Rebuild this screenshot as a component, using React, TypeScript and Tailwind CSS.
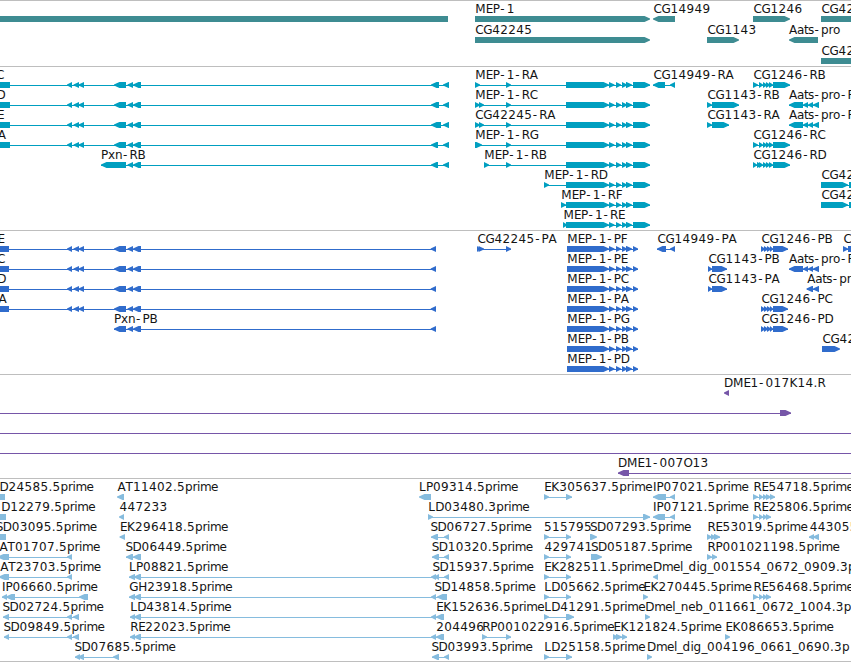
type Span = [number, number];
type Dir = "L" | "R";

interface Feature {
  label?: string;
  at?: number;
  dir: Dir;
  spans: Span[];
}

interface TrackData {
  color: string;
  height: string;
  rowHeight: number;
  rows: Feature[][];
}

const f = (label: string, at: number, dir: Dir, ...spans: Span[]): Feature => ({ label, at, dir, spans });

// Horizontal advance of each label glyph, in pixels.
const ADVANCE: Record<string, number> = {
  A: 8, B: 7.5, C: 8, D: 9, E: 7, G: 9, H: 9, I: 3.5, K: 8, L: 7, M: 10.5, O: 9, P: 7, R: 8, S: 7, T: 7.5,
  a: 7, b: 8, d: 8, e: 7, g: 8, i: 3, l: 3, m: 11, n: 7.5, o: 7.5, p: 7.5, r: 4.5, s: 6, t: 4, x: 7,
  "-": 7, "_": 5.5, ".": 4,
};

// Labels sit half a pixel inside the left end of their feature.
const LABEL_INSET = 0.6;

function glyphPositions(text: string, start: number) {
  let x = start + LABEL_INSET;
  return Array.from(text)
    .map((ch) => {
      const pos = ch === "-" ? x + 0.6 : x;
      x += ADVANCE[ch] ?? 8;
      return pos;
    })
    .join(" ");
}

function spanPoints([a, b]: Span, dir: Dir) {
  const tip = Math.min(5.5, b - a);
  return dir === "R"
    ? `${a},14 ${b - tip},14 ${b},16.5 ${b},17.5 ${b - tip},20 ${a},20`
    : `${b},14 ${a + tip},14 ${a},16.5 ${a},17.5 ${a + tip},20 ${b},20`;
}

// Gene track
const genes: Feature[][] = [
  [
    f("", 0, "L", [-20, 448]),
    f("MEP-1", 474.6, "R", [475, 650]),
    f("CG14949", 653, "L", [653, 675]),
    f("CG1246", 753, "R", [753, 790]),
    f("CG42", 821, "R", [821, 900]),
  ],
  [
    f("CG42245", 474.6, "R", [475, 650]),
    f("CG1143", 707, "R", [707, 739]),
    f("Aats-pro", 788.4, "L", [789, 818]),
  ],
  [f("CG42", 821, "R", [821, 900])],
];

// Exons shared by several transcripts
const pxnA: Span[] = [[67, 72], [73.5, 79], [78.5, 84]];
const pxnB: Span[] = [[127.5, 133], [133, 141]];
const mepTail: Span[] = [[566, 609], [609, 614.5], [616, 621], [622, 627], [626, 632]];
const mepCds: Span[] = [[567, 609], ...mepTail.slice(1), [633, 638]];
const mepEnd: Span[] = [...mepTail, [633, 650]];
const pxnRna = (label: string, at: number, end: number) =>
  f(label, at, "L", [-20, 10], ...pxnA, [114, 126], ...pxnB, [431, end], [443, 449]);
const pxnPep = (label: string, at: number) =>
  f(label, at, "L", [-20, 9], ...pxnA, [114, 126], ...pxnB, [430.7, 436]);
const cg1246: Span[] = [[759, 763], [763, 767], [766, 770], [769, 773], [773, 790]];
const cg1246p: Span[] = [[761, 765], [764, 768], [767, 771], [770, 773], [773, 788]];
const aats: Span[] = [[789, 803], [803, 808], [808, 813], [813, 819]];

const transcripts: Feature[][] = [
  [
    pxnRna("C", -4.6, 439),
    f("MEP-1-RA", 474.6, "R", [475, 480], [506, 511], ...mepEnd),
    f("CG14949-RA", 653, "L", [653, 665], [670, 675]),
    f("CG1246-RB", 753, "R", [753, 758], ...cg1246),
  ],
  [
    pxnRna("D", -4.2, 439),
    f("MEP-1-RC", 474.6, "R", [475, 480], [479, 484], [506, 511], ...mepEnd),
    f("CG1143-RB", 707, "R", [707, 712], [712, 739]),
    f("Aats-pro-R", 788.4, "L", ...aats),
  ],
  [
    pxnRna("E", -3.6, 441),
    f("CG42245-RA", 474.6, "R", [475, 480], [479, 484], [506, 511], ...mepEnd),
    f("CG1143-RA", 707, "R", [707, 712], [712, 729]),
    f("Aats-pro-R", 788.4, "L", ...aats),
  ],
  [
    pxnRna("A", -2.9, 438),
    f("MEP-1-RG", 474.6, "R", [475, 482], [506, 511], ...mepEnd),
    f("CG1246-RC", 753, "R", [753, 758], ...cg1246),
  ],
  [
    f("Pxn-RB", 100.4, "L", [101, 126], ...pxnB, [431, 438], [443, 449]),
    f("MEP-1-RB", 483.6, "R", [484, 489], [506, 511], ...mepEnd),
    f("CG1246-RD", 753, "R", [753, 757], [757, 762], ...cg1246),
  ],
  [f("MEP-1-RD", 543.6, "R", [544, 549], ...mepEnd), f("CG42", 821, "R", [821, 848], [849, 870])],
  [f("MEP-1-RF", 560.6, "R", [561, 566], ...mepEnd), f("CG42", 821, "R", [821, 848], [849, 870])],
  [f("MEP-1-RE", 562.8, "R", [563, 567], ...mepEnd)],
];

const proteins: Feature[][] = [
  [
    pxnPep("E", -3.2),
    f("CG42245-PA", 477, "R", [477, 480], [478.5, 484], [506, 511]),
    f("MEP-1-PF", 566.6, "R", ...mepCds),
    f("CG14949-PA", 657, "L", [657, 666], [670, 675]),
    f("CG1246-PB", 761, "R", ...cg1246p),
    f("C", 843, "R", [843, 848], [848, 870]),
  ],
  [
    pxnPep("C", -3.6),
    f("MEP-1-PE", 566.6, "R", ...mepCds),
    f("CG1143-PB", 708, "R", [708, 712], [712, 727]),
    f("Aats-pro-P", 788.4, "L", ...aats),
  ],
  [
    pxnPep("D", -3.4),
    f("MEP-1-PC", 566.6, "R", ...mepCds),
    f("CG1143-PA", 708, "R", [708, 712], [712, 727]),
    f("Aats-pro", 806.6, "L", [806.5, 813], [813, 819]),
  ],
  [pxnPep("A", -2.1), f("MEP-1-PA", 566.6, "R", ...mepCds), f("CG1246-PC", 761, "R", ...cg1246p)],
  [
    f("Pxn-PB", 113.4, "L", [114, 126], ...pxnB, [430.7, 436]),
    f("MEP-1-PG", 566.6, "R", ...mepCds),
    f("CG1246-PD", 761, "R", ...cg1246p),
  ],
  [f("MEP-1-PB", 566.6, "R", ...mepCds), f("CG42", 822, "R", [822, 840])],
  [f("MEP-1-PD", 566.6, "R", ...mepCds)],
];

const clones: Feature[][] = [
  [f("DME1-017K14.R", 723.4, "L", [724, 729])],
  [f("", 0, "R", [-20, -10], [780, 791])],
  [f("", 0, "R", [-20, -10], [870, 880])],
  [f("", 0, "R", [-20, -10], [870, 880])],
  [f("DME1-007O13", 617.4, "L", [618, 629], [870, 880])],
];

const re: Span[] = [[753, 758], [759, 763], [763, 767], [766, 771]];
const ek: Span[] = [[544, 549], [566, 571]];
const sd: Span[] = [[432, 439], [444, 449]];

const ests: Feature[][] = [
  [
    f("D24585.5prime", -1, "L", [-20, 5]),
    f("AT11402.5prime", 116.8, "L", [117, 124]),
    f("LP09314.5prime", 418.4, "L", [419, 431]),
    f("EK305637.5prime", 543.6, "R", [544, 549], [566, 572]),
    f("IP07021.5prime", 652.4, "L", [653, 666], [670, 675]),
    f("RE54718.5prime", 752.8, "R", [753, 758], [759, 763], [763, 767], [766, 771], [770, 775]),
  ],
  [
    f("D12279.5prime", 0.6, "L", [-20, 6]),
    f("447233", 119, "L", [119, 124]),
    f("LD03480.3prime", 427.6, "R", [428, 433], [643, 650]),
    f("IP07121.5prime", 652.4, "L", [653, 665], [670, 675]),
    f("RE25806.5prime", 752.8, "R", ...re),
  ],
  [
    f("SD03095.5prime", -4.8, "L", [-20, 6]),
    f("EK296418.5prime", 119.4, "L", [119.5, 125]),
    f("SD06727.5prime", 430, "L", [431, 438], [444, 449]),
    f("515795", 543.4, "R", ...ek),
    f("SD07293.5prime", 589.4, "R", [590, 597]),
    f("RE53019.5prime", 706.8, "R", [707, 712], [711, 716], [714, 720]),
    f("443055", 809.2, "L", [809, 814], [813, 819]),
  ],
  [
    f("AT01707.5prime", -1, "L", [-2, 9], [67, 72]),
    f("SD06449.5prime", 125, "L", [126, 133], [133, 141]),
    f("SD10320.5prime", 431.2, "L", ...sd),
    f("429741", 544, "R", ...ek),
    f("SD05187.5prime", 590.4, "R", [591, 602]),
    f("RP001021198.5prime", 706.8, "R", [707, 712], [712, 717]),
  ],
  [
    f("AT23703.5prime", -0.4, "L", [-1, 9], [67, 72]),
    f("LP08821.5prime", 128.4, "L", [129, 135], [134, 141], [431, 436], [434, 439], [444, 449]),
    f("SD15937.5prime", 431.8, "L"),
    f("EK282511.5prime", 543.6, "R", ...ek),
    f("Dmel_dig_001554_0672_0909.3p", 652.4, "L", [653, 658]),
  ],
  [
    f("IP06660.5prime", 1.4, "L", [2, 7], [6, 15], [79, 88]),
    f("GH23918.5prime", 128.6, "L", [129, 135], [134, 141], [431, 436], [437, 447]),
    f("SD14858.5prime", 433.8, "L"),
    f("LD05662.5prime", 543.6, "R", ...ek),
    f("EK270445.5prime", 642.8, "R", [643, 648]),
    f("RE56468.5prime", 752.8, "R", ...re),
  ],
  [
    f("SD02724.5prime", 1.8, "L", [3, 9], [67, 72], [73, 79]),
    f("LD43814.5prime", 129.6, "L", [130, 135], [134, 141], [431, 436], [436, 444]),
    f("EK152636.5prime", 435.6, "L"),
    f("LD41291.5prime", 543.6, "R", [544, 549], [566, 574]),
    f("Dmel_neb_011661_0672_1004.3p", 644.6, "R", [645, 650]),
  ],
  [
    f("SD09849.5prime", 2.8, "L", [4, 9], [67, 72], [73, 79]),
    f("RE22023.5prime", 129.6, "L", [130, 135], [134, 141], [431, 436], [436, 444]),
    f("204496", 435.6, "L"),
    f("RP001022916.5prime", 481.6, "R", [482, 487], [506, 511]),
    f("EK121824.5prime", 612.8, "R", [613, 618], [616, 622], [622, 627]),
    f("EK086653.5prime", 724.8, "R", [725, 730]),
  ],
  [
    f("SD07685.5prime", 73.8, "L", [75, 80], [78, 84], [113, 119]),
    f("SD03993.5prime", 431, "L", ...sd),
    f("LD25158.5prime", 543.6, "R", [544, 549], [566, 572]),
    f("Dmel_dig_004196_0661_0690.3p", 646.4, "R", [647, 652]),
  ],
];

const TRACKS: TrackData[] = [
  { color: "#3e8c92", height: "h-[66px]", rowHeight: 21, rows: genes },
  { color: "#009fc0", height: "h-[164px]", rowHeight: 20, rows: transcripts },
  { color: "#306ccc", height: "h-[144px]", rowHeight: 20, rows: proteins },
  { color: "#7656a8", height: "h-[104px]", rowHeight: 20, rows: clones },
  { color: "#86bcde", height: "h-[183px]", rowHeight: 20, rows: ests },
];

function FeatureGlyph({ feature, color }: { feature: Feature; color: string }) {
  const { label, at = 0, dir, spans } = feature;
  return (
    <g>
      {spans.length > 1 && (
        <rect x={spans[0][0]} y={17} width={spans[spans.length - 1][1] - spans[0][0]} height={1} fill={color} shapeRendering="crispEdges" />
      )}
      {spans.map((span, i) => (
        <polygon key={i} points={spanPoints(span, dir)} fill={color} />
      ))}
      {label && (
        <text x={glyphPositions(label, at)} y={11} fill="#141414">
          {label}
        </text>
      )}
    </g>
  );
}

function Track({ track }: { track: TrackData }) {
  return (
    <section className={`flex flex-col border-t border-[#bebebe] pt-px ${track.height}`}>
      {track.rows.map((row, i) => (
        <svg
          key={i}
          width={851}
          height={track.rowHeight}
          className="block shrink-0 overflow-visible font-['DejaVu_Sans',sans-serif] text-[12px]"
        >
          {row.map((feature, j) => (
            <FeatureGlyph key={j} feature={feature} color={track.color} />
          ))}
        </svg>
      ))}
    </section>
  );
}

export default function App() {
  return (
    <main className="flex h-[662px] w-[851px] flex-col overflow-hidden bg-white">
      {TRACKS.map((track, i) => (
        <Track key={i} track={track} />
      ))}
      <div className="h-px shrink-0 bg-[#bebebe]" />
    </main>
  );
}
